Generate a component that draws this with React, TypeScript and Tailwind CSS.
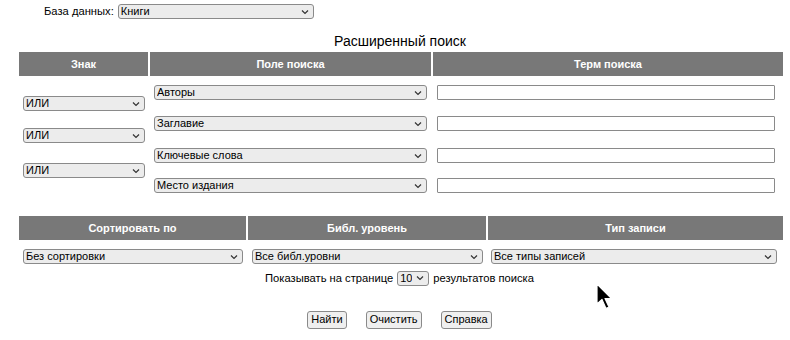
import React from "react";

const font = "font-['Liberation_Sans','DejaVu_Sans',sans-serif]";

function Chevron() {
  return (
    <svg
      className="pointer-events-none absolute right-[5px] top-1/2 -translate-y-1/2"
      width="8"
      height="5"
      viewBox="0 0 8 5"
      fill="none"
    >
      <path d="M1 1l3 3 3-3" stroke="#333" strokeWidth="1.2" />
    </svg>
  );
}

function Select({ value, className }: { value: string; className: string }) {
  return (
    <span className={`relative inline-block ${className}`}>
      <select
        defaultValue={value}
        className="block h-[15px] w-full appearance-none rounded-[3px] border border-[#8a8a8a] bg-[#ececec] pl-[2px] pr-4 text-[11px] leading-[13px] text-black outline-none"
      >
        <option>{value}</option>
      </select>
      <Chevron />
    </span>
  );
}

function TermInput() {
  return (
    <input
      type="text"
      className="block h-[15px] w-[338px] rounded-[1px] border border-[#8a8a8a] bg-white outline-none"
    />
  );
}

function Head({ children }: { children: React.ReactNode }) {
  return (
    <div className="flex h-[24px] items-center justify-center bg-[#787878] text-[11px] font-bold text-white">
      {children}
    </div>
  );
}

function Button({ children }: { children: React.ReactNode }) {
  return (
    <button className="h-[18px] rounded-[3px] border border-[#8a8a8a] bg-[#efefef] px-[3px] text-[11px] leading-none text-black">
      {children}
    </button>
  );
}

export default function App() {
  return (
    <div className={`relative h-[340px] w-[790px] overflow-hidden bg-white text-[11.2px] text-black ${font}`}>
      {/* database selector */}
      <div className="flex items-center gap-[4px] pl-[44px] pt-[4px]">
        <span className="leading-[15px]">База данных:</span>
        <Select value="Книги" className="w-[196px]" />
      </div>

      <div className="mt-[14px] pl-[10px] text-center text-[14px] leading-[17px]">Расширенный поиск</div>

      {/* search rows */}
      <div className="ml-[19px] mt-[2px] grid grid-cols-[129px_281px_350px] gap-x-[2px]">
        <Head>Знак</Head>
        <Head>Поле поиска</Head>
        <Head>Терм поиска</Head>

        <div className="flex flex-col pl-[4px] pt-[20px]">
          <Select value="ИЛИ" className="w-[122px]" />
          <Select value="ИЛИ" className="mt-[17px] w-[122px]" />
          <Select value="ИЛИ" className="mt-[20px] w-[122px]" />
        </div>
        <div className="flex flex-col pl-[4px] pt-[9px]">
          <Select value="Авторы" className="w-[273px]" />
          <Select value="Заглавие" className="mt-[16px] w-[273px]" />
          <Select value="Ключевые слова" className="mt-[17px] w-[273px]" />
          <Select value="Место издания" className="mt-[15px] w-[273px]" />
        </div>
        <div className="flex flex-col pl-[4px] pt-[9px]">
          <TermInput />
          <div className="mt-[16px]">
            <TermInput />
          </div>
          <div className="mt-[17px]">
            <TermInput />
          </div>
          <div className="mt-[15px]">
            <TermInput />
          </div>
        </div>
      </div>

      {/* sort / level / type */}
      <div className="ml-[19px] mt-[23px] grid grid-cols-[227px_238px_295px] gap-x-[2px]">
        <Head>Сортировать по</Head>
        <Head>Библ. уровень</Head>
        <Head>Тип записи</Head>
        <div className="pl-[4px] pt-[8px]">
          <Select value="Без сортировки" className="w-[220px]" />
        </div>
        <div className="pl-[4px] pt-[8px]">
          <Select value="Все библ.уровни" className="w-[231px]" />
        </div>
        <div className="pl-[3px] pt-[8px]">
          <Select value="Все типы записей" className="w-[286px]" />
        </div>
      </div>

      <div className="mt-[5px] flex items-center justify-center gap-[4px] pl-[9px]">
        <span>Показывать на странице</span>
        <Select value="10" className="w-[32px]" />
        <span>результатов поиска</span>
      </div>

      <div className="mt-[24px] flex items-center justify-center gap-[19px] pl-[9px]">
        <Button>Найти</Button>
        <Button>Очистить</Button>
        <Button>Справка</Button>
      </div>

      {/* mouse pointer */}
      <svg className="absolute left-[596px] top-[283px]" width="18" height="28" viewBox="0 0 18 28">
        <path
          d="M1 1 L1 21 L6 16.5 L10 25.5 L13 24 L9 15.5 L15.5 15.5 Z"
          fill="#000"
          stroke="#fff"
          strokeWidth="1.2"
          strokeLinejoin="round"
        />
      </svg>
    </div>
  );
}
